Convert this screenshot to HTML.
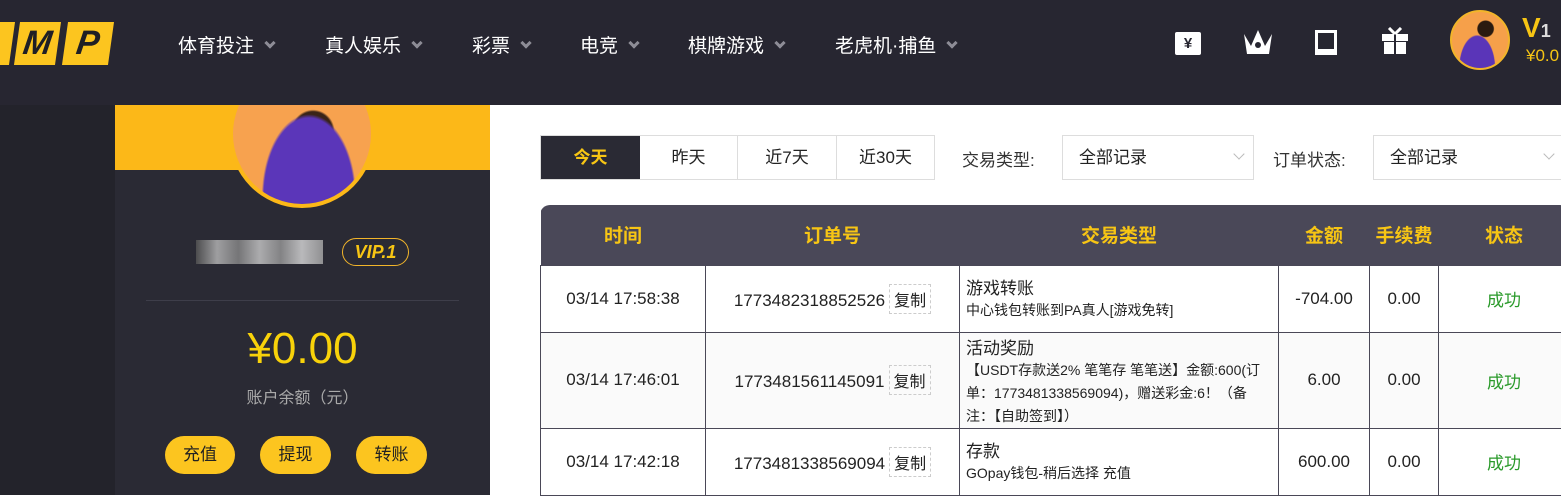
<!DOCTYPE html><html><head><meta charset="utf-8"><style>
*{margin:0;padding:0;box-sizing:border-box}
body{width:1561px;height:495px;overflow:hidden;background:#fff;font-family:"Liberation Sans","Noto Sans CJK SC",sans-serif;position:relative}
.a{position:absolute}
.nav{left:0;top:0;width:1561px;height:105px;background:#272631;z-index:2}
.z{z-index:3}
.ni{top:31px;color:#fff;font-size:19px;z-index:3}
.ni i{display:inline-block;width:8px;height:8px;border-right:3px solid #8d8c96;border-bottom:3px solid #8d8c96;transform:rotate(45deg);margin-left:12px;position:relative;top:-5px}
.tb td{border:1px solid #4a4857;text-align:center;font-size:17px;color:#222}
.th td{background:#4a4858;color:#f7c514;font-weight:bold;font-size:19px;border:none}
.btn{top:436px;height:38px;border-radius:19px;background:#fcc51f;color:#222;font-size:17px;text-align:center;line-height:38px}
.cp{display:inline-block;border:1px dashed #ccc;padding:2px 4px;font-size:16px;margin-left:4px}
.d{text-align:left!important;padding-left:6px;font-size:17px!important;vertical-align:top;padding-top:8px}
.d small{font-size:14px;display:block;line-height:23px}
</style></head><body>
<div class="a nav"></div>
<div class="a z" style="left:-8px;top:22px;width:20px;height:43px;background:#fcc51f;transform:skewX(-8deg)"></div>
<div class="a z" style="left:17px;top:22px;width:41px;height:43px;background:#fcc51f;transform:skewX(-8deg);font:italic 900 34px 'Liberation Sans';color:#1f1f25;text-align:center;line-height:43px">M</div>
<div class="a z" style="left:65px;top:22px;width:46px;height:43px;background:#fcc51f;transform:skewX(-8deg);font:italic 900 34px 'Liberation Sans';color:#1f1f25;text-align:center;line-height:43px">P</div>
<div class="a ni" style="left:178px">体育投注<i></i></div>
<div class="a ni" style="left:325px">真人娱乐<i></i></div>
<div class="a ni" style="left:472px">彩票<i></i></div>
<div class="a ni" style="left:580px">电竞<i></i></div>
<div class="a ni" style="left:688px">棋牌游戏<i></i></div>
<div class="a ni" style="left:835px">老虎机·捕鱼<i></i></div>
<div class="a z" style="left:1175px;top:32px;width:26px;height:23px;background:#fff;border-radius:2px;color:#272631;font-size:15px;font-weight:bold;text-align:center;line-height:23px">¥</div>
<svg class="a z" style="left:1242px;top:26px" width="32" height="30"><path d="M2 8 L9 20 L16 4 L23 20 L30 8 L27 28 H5Z" fill="#fff"/><circle cx="16" cy="19" r="3" fill="#272631"/></svg>
<div class="a z" style="left:1315px;top:30px;width:22px;height:25px;border:3px solid #fff;border-bottom-width:6px"></div>
<svg class="a z" style="left:1381px;top:27px" width="28" height="28"><rect x="1" y="7" width="26" height="7" fill="#fff"/><rect x="3" y="15" width="22" height="12" fill="#fff"/><rect x="13" y="7" width="2" height="20" fill="#272631"/><path d="M14 7 L8 1 M14 7 L20 1" stroke="#fff" stroke-width="3"/></svg>
<div class="a z" style="left:1450px;top:10px;width:60px;height:60px;border-radius:50%;background:radial-gradient(ellipse at 45% 100%,#5a35b8 40%,transparent 42%),radial-gradient(circle at 60% 30%,#2a1a10 15%,transparent 17%),#f6a04a;border:2px solid #f2b52a"></div>
<div class="a z" style="left:1522px;top:12px;color:#f7c514;font:bold 28px 'Liberation Sans'">V<span style="color:#ddd;font-size:18px">1</span></div>
<div class="a z" style="left:1526px;top:46px;color:#f7c514;font-size:17px">¥0.0</div>
<div class="a" style="left:0;top:105px;width:115px;height:390px;background:#23232b"></div>
<div class="a" style="left:115px;top:105px;width:375px;height:390px;background:#2a2a34"></div>
<div class="a" style="left:115px;top:105px;width:375px;height:65px;background:#fcb818"></div>
<div class="a" style="left:229px;top:60px;width:146px;height:148px;border-radius:50%;background:radial-gradient(ellipse at 55% 95%,#5b36b9 42%,transparent 44%),radial-gradient(circle at 58% 48%,#3a2418 18%,transparent 20%),#f7a24f;border:4px solid #fcb818"></div>
<div class="a" style="left:196px;top:240px;width:127px;height:24px;background:linear-gradient(90deg,#555,#bbb,#888,#ccc,#999,#ddd,#aaa);opacity:.8"></div>
<div class="a" style="left:342px;top:238px;width:67px;height:28px;border:1px solid #f2b52a;border-radius:14px;color:#f7c514;font:italic bold 18px 'Liberation Sans';text-align:center;line-height:26px">VIP.1</div>
<div class="a" style="left:146px;top:300px;width:313px;height:1px;background:#3e3e4a"></div>
<div class="a" style="left:115px;top:324px;width:375px;text-align:center;color:#f8d20a;font-size:44px">¥0.00</div>
<div class="a" style="left:115px;top:384px;width:375px;text-align:center;color:#aaa;font-size:16px">账户余额（元）</div>
<div class="a btn" style="left:165px;width:70px">充值</div>
<div class="a btn" style="left:260px;width:71px">提现</div>
<div class="a btn" style="left:356px;width:71px">转账</div>
<div class="a" style="left:540px;top:135px;width:395px;height:45px;border:1px solid #ddd;display:flex;font-size:17px;color:#222">
<div style="width:99px;background:#2a2a34;color:#f7c514;font-weight:bold;text-align:center;line-height:43px">今天</div>
<div style="width:98px;border-right:1px solid #ddd;text-align:center;line-height:43px">昨天</div>
<div style="width:99px;border-right:1px solid #ddd;text-align:center;line-height:43px">近7天</div>
<div style="flex:1;text-align:center;line-height:43px">近30天</div></div>
<div class="a" style="left:962px;top:146px;font-size:17px;color:#333">交易类型:</div>
<div class="a" style="left:1062px;top:135px;width:192px;height:45px;border:1px solid #ddd;padding-left:16px;line-height:43px;font-size:17px;color:#222">全部记录</div>
<div class="a" style="left:1273px;top:146px;font-size:17px;color:#333">订单状态:</div>
<div class="a" style="left:1373px;top:135px;width:200px;height:45px;border:1px solid #ddd;padding-left:16px;line-height:43px;font-size:17px;color:#222">全部记录</div>
<div class="a" style="left:1235px;top:150px;width:8px;height:8px;border-right:1px solid #bbb;border-bottom:1px solid #bbb;transform:rotate(45deg)"></div>
<div class="a" style="left:1545px;top:150px;width:8px;height:8px;border-right:1px solid #bbb;border-bottom:1px solid #bbb;transform:rotate(45deg)"></div>
<table class="a tb" style="left:540px;top:205px;width:1030px;border-collapse:collapse;border-radius:10px 10px 0 0;overflow:hidden">
<tr class="th" style="height:60px"><td style="width:165px">时间</td><td style="width:254px">订单号</td><td style="width:319px">交易类型</td><td style="width:91px">金额</td><td style="width:69px">手续费</td><td>状态</td></tr>
<tr style="height:67px"><td>03/14 17:58:38</td><td>1773482318852526<span class="cp">复制</span></td><td class="d" style="padding-top:8px">游戏转账<small>中心钱包转账到PA真人[游戏免转]</small></td><td>-704.00</td><td>0.00</td><td style="color:#2a9a2a">成功</td></tr>
<tr style="height:95px;background:#fafafa"><td>03/14 17:46:01</td><td>1773481561145091<span class="cp">复制</span></td><td class="d" style="padding-top:1px;padding-right:4px">活动奖励<small>【USDT存款送2% 笔笔存 笔笔送】金额:600(订单：1773481338569094)，赠送彩金:6！（备注：【自助签到】）</small></td><td>6.00</td><td>0.00</td><td style="color:#2a9a2a">成功</td></tr>
<tr style="height:67px"><td>03/14 17:42:18</td><td>1773481338569094<span class="cp">复制</span></td><td class="d">存款<small>GOpay钱包-稍后选择 充值</small></td><td>600.00</td><td>0.00</td><td style="color:#2a9a2a">成功</td></tr>
</table>
</body></html>
